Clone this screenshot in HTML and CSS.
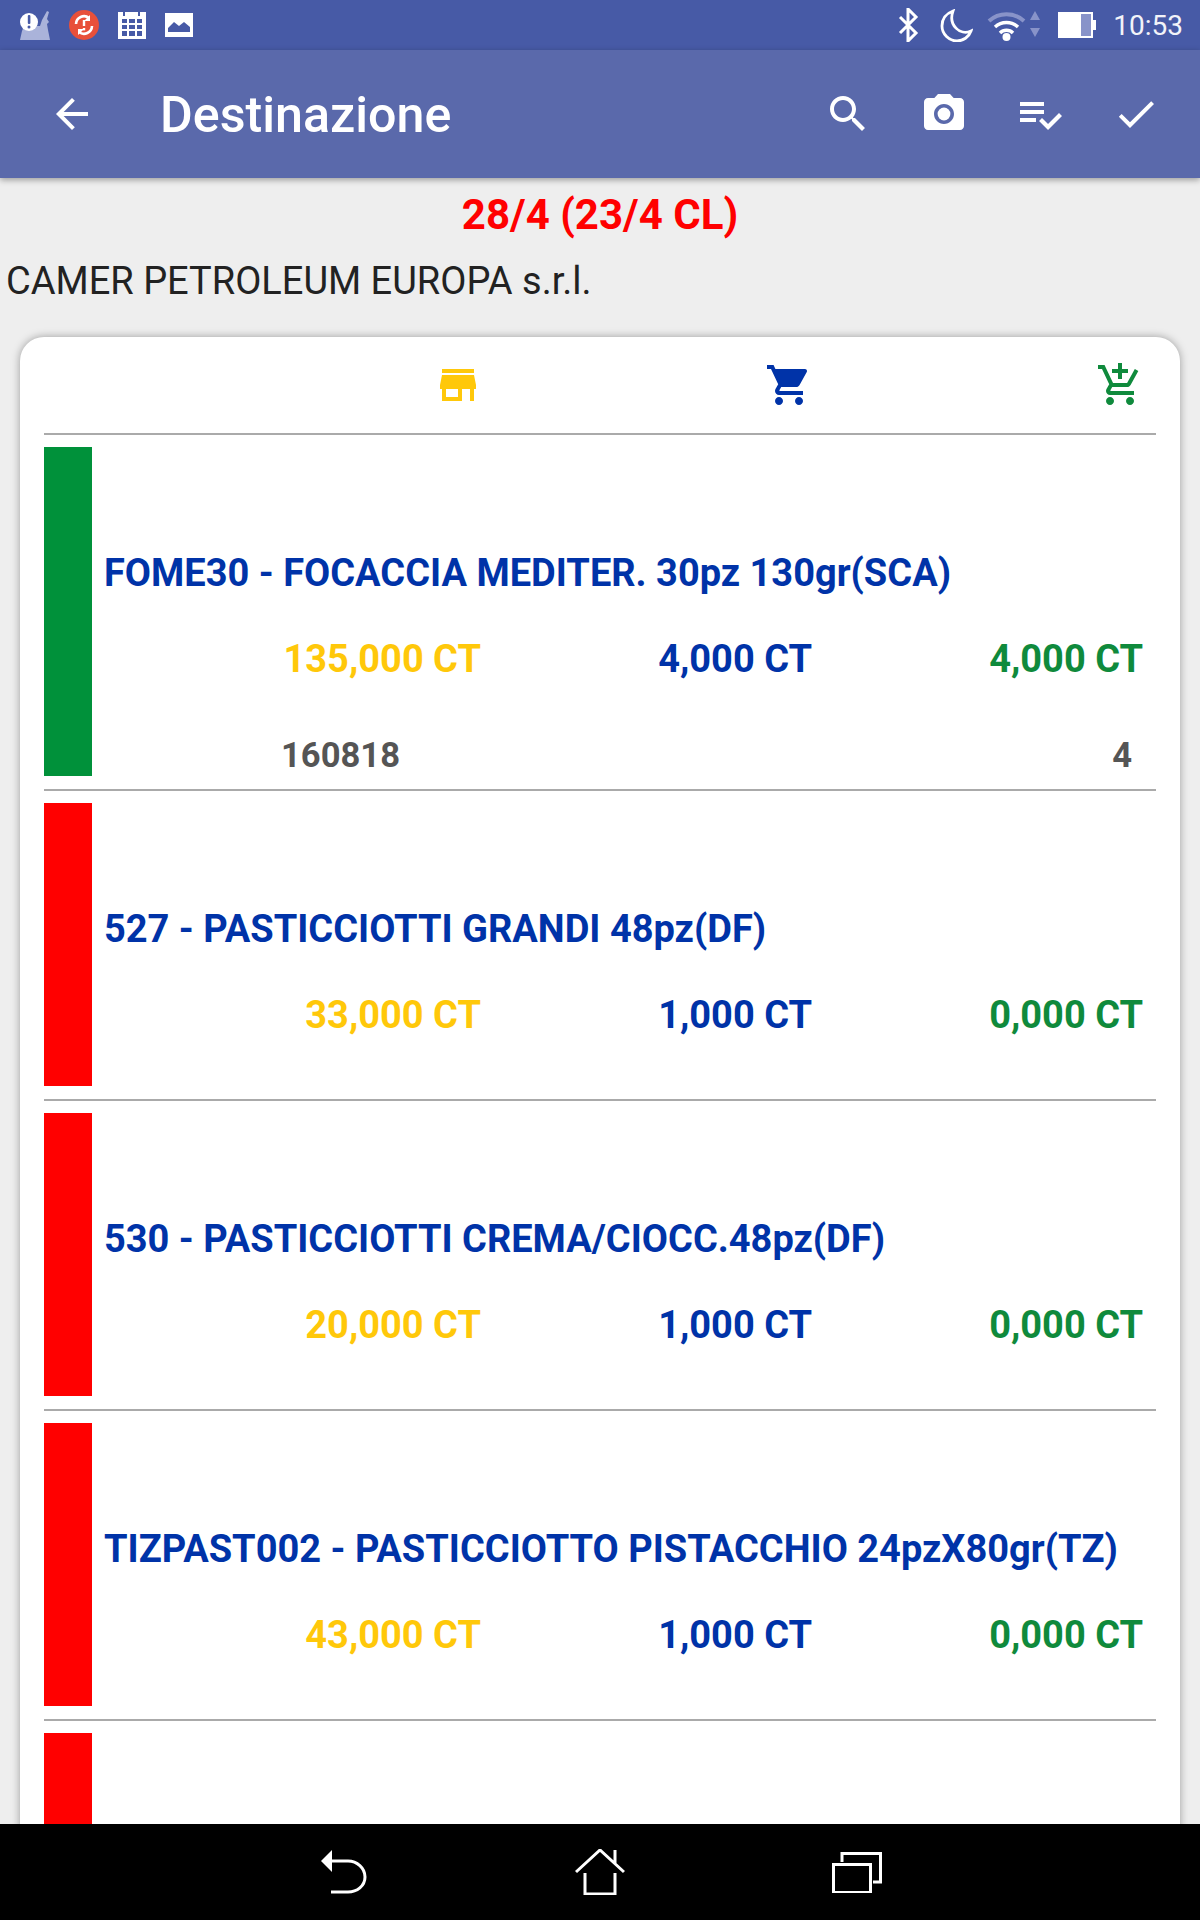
FILE: index.html
```html
<!DOCTYPE html>
<html lang="it">
<head>
<meta charset="utf-8">
<title>Destinazione</title>
<link rel="stylesheet" href="styles.css">
</head>
<body>
<div class="screen">
  <div class="statusbar">
    <div class="status-left">
      <svg class="st-a" viewBox="0 0 30 30"><path class="lav" d="M4 16h16l2-6 5-9 2 1-2 7 2 3-2 2 1 6 2 10H0l2-9z"/><circle class="wht" cx="9" cy="12" r="9"/><rect class="ink" x="7.800" y="5" width="2.600" height="9" rx="1"/><circle class="ink" cx="9" cy="17" r="1.500"/></svg>
      <svg class="st-b" viewBox="0 0 30 30"><circle class="red" cx="15" cy="15" r="15"/><path class="sync" d="M7 14a8 8 0 0 1 13-6M23 16a8 8 0 0 1-13 6"/><path class="wht" d="M21 5v6h-6zM9 25v-6h6z"/><rect class="wht" x="13.800" y="10" width="2.400" height="6"/><rect class="wht" x="13.800" y="18" width="2.400" height="2.400"/></svg>
      <svg class="st-c" viewBox="0 0 28 28"><path class="wht" d="M0 1h28v27H0z"/><path class="ink" d="M5 1h2v4H5zM20 1h2v4h-2zM4 8h5v4H4zM11 8h6v4h-6zM19 8h5v4h-5zM4 14h5v4H4zM11 14h6v4h-6zM19 14h5v4h-5zM4 20h5v5H4zM11 20h6v5h-6zM19 20h5v5h-5z"/></svg>
      <svg class="st-d" viewBox="0 0 28 24"><path class="wht" d="M0 0h28v24H0z"/><path class="ink" d="M3 19v-4l6-6 5 4 5-4 6 5v5z"/></svg>
    </div>
    <div class="status-right">
      <svg class="st-bt" viewBox="0 0 22 34"><path class="line-w" d="M2 9l16 16-8 8V1l8 8L2 25"/></svg>
      <svg class="st-moon" viewBox="0 0 33 33"><path class="line-thin" d="M13 2C5 5 2 11 2 17c0 8 7 15 15 15 6 0 12-4 14-10C20 27 8 16 13 2z"/></svg>
      <svg class="st-wifi" viewBox="0 0 54 32"><path class="arc-dim" d="M2 12a26 26 0 0 1 35 0"/><path class="arc" d="M8 18a17 17 0 0 1 23 0M13 24a9 9 0 0 1 13 0"/><circle class="wht" cx="19.500" cy="28" r="4"/><path class="lav2" d="M43 11l5-9 5 9zM43 19l5 9 5-9z"/></svg>
      <svg class="st-bat" viewBox="0 0 38 26"><path class="wht" d="M0 0h35v26H0zM35 8h3v10h-3z"/><path class="lav2" d="M23 2h10v22H23z"/></svg>
      <span class="clock">10:53</span>
    </div>
  </div>
  <header class="appbar">
    <svg class="ic-48 nav-back" viewBox="0 0 24 24"><path class="wht" d="M20 11H7.830l5.590-5.590L12 4l-8 8 8 8 1.410-1.410L7.830 13H20v-2z"/></svg>
    <h1 class="title">Destinazione</h1>
    <div class="actions">
      <svg class="ic-48" viewBox="0 0 24 24"><path class="wht" d="M15.5 14h-.79l-.28-.27C15.41 12.59 16 11.11 16 9.5 16 5.91 13.09 3 9.5 3S3 5.91 3 9.5 5.91 16 9.5 16c1.61 0 3.09-.59 4.23-1.57l.27.28v.79l5 4.99L20.49 19l-4.99-5zm-6 0C7.01 14 5 11.99 5 9.5S7.01 5 9.5 5 14 7.01 14 9.5 11.99 14 9.5 14z"/></svg>
      <svg class="ic-48" viewBox="0 0 24 24"><circle class="wht" cx="12" cy="12" r="3.2"/><path class="wht" d="M9 2L7.17 4H4c-1.1 0-2 .9-2 2v12c0 1.1.9 2 2 2h16c1.1 0 2-.9 2-2V6c0-1.1-.9-2-2-2h-3.17L15 2H9zm3 15c-2.76 0-5-2.24-5-5s2.24-5 5-5 5 2.24 5 5-2.24 5-5 5z"/></svg>
      <svg class="ic-48" viewBox="0 0 24 24"><path class="wht" d="M14 10H2v2h12v-2zm0-4H2v2h12V6zM2 16h8v-2H2v2zm19.5-4.5L23 13l-6.99 7-4.51-4.5L13 14l3.01 3 5.49-5.5z"/></svg>
      <svg class="ic-48" viewBox="0 0 24 24"><path class="wht" d="M9 16.17L4.83 12l-1.42 1.41L9 19 21 7l-1.41-1.41z"/></svg>
    </div>
  </header>
  <main class="content">
    <div class="heading">28/4 (23/4 CL)</div>
    <div class="company">CAMER PETROLEUM EUROPA s.r.l.</div>
    <section class="card">
      <div class="card-head">
        <svg class="ic-48 yellow" viewBox="0 0 24 24"><path d="M20 4H4v2h16V4zm1 10v-2l-1-5H4l-1 5v2h1v6h10v-6h4v6h2v-6h1zm-9 4H6v-4h6v4z"/></svg>
        <svg class="ic-48 blue" viewBox="0 0 24 24"><path d="M7 18c-1.1 0-1.99.9-1.99 2S5.9 22 7 22s2-.9 2-2-.9-2-2-2zM1 2v2h2l3.6 7.59-1.35 2.45c-.16.28-.25.61-.25.96 0 1.1.9 2 2 2h12v-2H7.42c-.14 0-.25-.11-.25-.25l.03-.12.9-1.63h7.45c.75 0 1.41-.41 1.75-1.03l3.58-6.49c.08-.14.12-.31.12-.48 0-.55-.45-1-1-1H5.21l-.94-2H1zm16 16c-1.1 0-1.99.9-1.99 2s.89 2 1.99 2 2-.9 2-2-.9-2-2-2z"/></svg>
        <svg class="ic-48 green" viewBox="0 0 24 24"><path d="M11 9h2V6h3V4h-3V1h-2v3H8v2h3v3zm-4 9c-1.1 0-1.99.9-1.99 2S5.9 22 7 22s2-.9 2-2-.9-2-2-2zm10 0c-1.1 0-1.99.9-1.99 2s.89 2 1.99 2 2-.9 2-2-.9-2-2-2zm-9.83-3.25l.03-.12.9-1.63h7.45c.75 0 1.41-.41 1.75-1.03l3.86-7.01L19.42 4h-.01l-1.1 2-2.76 5H8.53l-.13-.27L6.16 6l-.95-2-.94-2H1v2h2l3.6 7.59-1.35 2.45c-.16.28-.25.61-.25.96 0 1.1.9 2 2 2h12v-2H7.42c-.13 0-.25-.11-.25-.25z"/></svg>
      </div>
      <article class="row">
        <div class="bar bar-green"></div>
        <div class="row-body">
          <div class="name">FOME30 - FOCACCIA MEDITER. 30pz 130gr(SCA)</div>
          <div class="values"><span class="yellow">135,000 CT</span><span class="blue">4,000 CT</span><span class="green">4,000 CT</span></div>
          <div class="extra"><span>160818</span><span>4</span></div>
        </div>
      </article>
      <article class="row">
        <div class="bar bar-red"></div>
        <div class="row-body">
          <div class="name">527 - PASTICCIOTTI GRANDI 48pz(DF)</div>
          <div class="values"><span class="yellow">33,000 CT</span><span class="blue">1,000 CT</span><span class="green">0,000 CT</span></div>
        </div>
      </article>
      <article class="row">
        <div class="bar bar-red"></div>
        <div class="row-body">
          <div class="name">530 - PASTICCIOTTI CREMA/CIOCC.48pz(DF)</div>
          <div class="values"><span class="yellow">20,000 CT</span><span class="blue">1,000 CT</span><span class="green">0,000 CT</span></div>
        </div>
      </article>
      <article class="row">
        <div class="bar bar-red"></div>
        <div class="row-body">
          <div class="name">TIZPAST002 - PASTICCIOTTO PISTACCHIO 24pzX80gr(TZ)</div>
          <div class="values"><span class="yellow">43,000 CT</span><span class="blue">1,000 CT</span><span class="green">0,000 CT</span></div>
        </div>
      </article>
      <article class="row">
        <div class="bar bar-red"></div>
        <div class="row-body"></div>
      </article>
    </section>
  </main>
  <nav class="navbar">
    <svg class="nv-back" viewBox="0 0 46 44"><path class="wht" d="M0 11L11 0v22z"/><path class="line-nav" d="M10 11h17c9 0 17 7 17 16s-8 15-17 15H10"/></svg>
    <svg class="nv-home" viewBox="0 0 50 46"><path class="line-nav" d="M1 23L25 1l24 22M40 1v13M10 24v21h30V24"/></svg>
    <svg class="nv-rec" viewBox="0 0 50 41"><path class="line-nav" d="M1.500 12.500h37v28h-37zM10 10V1.500h38.500V30H41"/></svg>
  </nav>
</div>
</body>
</html>
```
FILE: styles.css
```css
* { box-sizing: border-box; }
html, body { margin: 0; padding: 0; }
body { font-family: Roboto, "Noto Sans", sans-serif; background: #eeeeee; }
svg { display: block; flex: none; }

.screen { width: 1200px; height: 1920px; display: flex; flex-direction: column; overflow: hidden; }

.wht { fill: #fff; }
.ink { fill: #475aa6; }
.lav { fill: #aab3da; }
.lav2 { fill: #8893c9; }
.red { fill: #e8503a; }
.sync { fill: none; stroke: #fff; stroke-width: 2.6; }
.line-w { fill: none; stroke: #fff; stroke-width: 3; }
.line-thin { fill: none; stroke: #fff; stroke-width: 2.8; }
.arc { fill: none; stroke: #fff; stroke-width: 3.4; }
.arc-dim { fill: none; stroke: #8893c9; stroke-width: 4; }
.line-nav { fill: none; stroke: #fff; stroke-width: 3; }

.statusbar { height: 50px; flex: none; background: #475aa6; display: flex; justify-content: space-between; align-items: center; padding: 0 17px 0 20px; }
.status-left, .status-right { display: flex; align-items: center; }
.status-left { gap: 19px; }
.st-a, .st-b { width: 30px; height: 30px; }
.st-c { width: 28px; height: 28px; }
.st-d { width: 28px; height: 24px; }
.st-bt { width: 22px; height: 34px; margin-right: 20px; }
.st-moon { width: 33px; height: 33px; margin-right: 14px; }
.st-wifi { width: 54px; height: 32px; margin-right: 17px; }
.st-bat { width: 38px; height: 26px; margin-right: 17px; }
.clock { font-size: 28px; line-height: 34px; color: #f2f3f9; padding-top: 2px; }

.appbar { height: 128px; flex: none; background: #5a69ab; display: flex; align-items: center; padding: 0 40px 0 48px; box-shadow: 0 2px 6px rgba(0, 0, 0, .35); position: relative; z-index: 1; }
.ic-48 { width: 48px; height: 48px; fill: currentColor; }
.nav-back { margin-right: 64px; }
.title { margin: 0; flex: 1; font-size: 50.2px; font-weight: 500; line-height: 56px; padding-top: 2px; color: #fff; }
.actions { display: flex; gap: 48px; }

.content { flex: 1; min-height: 0; overflow: hidden; padding-top: 14px; }
.heading { height: 46px; line-height: 46px; font-size: 42px; font-weight: 700; color: #ff0000; text-align: center; }
.company { height: 46px; line-height: 46px; margin-top: 20px; padding-left: 6px; font-size: 38px; color: #222; }

.card { margin: 33px 20px 0; padding: 0 24px; background: #fff; border-radius: 24px 24px 0 0; box-shadow: 0 0 8px rgba(0, 0, 0, .35); min-height: 1500px; }
.card-head { display: grid; grid-template-columns: repeat(3, 331px); justify-content: end; justify-items: end; padding: 24px 12px 24px 0; border-bottom: 2px solid #aaaaaa; }
.row { display: flex; padding: 12px 0 13px; border-bottom: 2px solid #aaaaaa; }
.bar { width: 48px; flex: none; margin-right: 12px; }
.bar-green { background: #00913a; }
.bar-red { background: #ff0000; }
.row-body { flex: 1; padding-top: 102px; min-height: 283px; font-weight: 700; }
.name { font-size: 38px; line-height: 48px; color: #0033a8; white-space: nowrap; }
.values { display: grid; grid-template-columns: repeat(3, 331px); justify-content: end; justify-items: end; padding-right: 13px; margin: 38px 0 47px; font-size: 38px; line-height: 48px; }
.extra { display: flex; justify-content: space-between; padding: 5px 24px 0 177px; font-size: 34.6px; line-height: 41px; color: #555555; }
.yellow { color: #ffc80a; }
.blue { color: #0033a8; }
.green { color: #0f8a3c; }

.navbar { height: 96px; flex: none; background: #000; position: relative; z-index: 1; display: flex; align-items: center; justify-content: center; padding-left: 3px; }
.nv-back { width: 46px; height: 44px; margin-right: 208px; }
.nv-home { width: 50px; height: 46px; margin-right: 207px; }
.nv-rec { width: 50px; height: 41px; }
```
